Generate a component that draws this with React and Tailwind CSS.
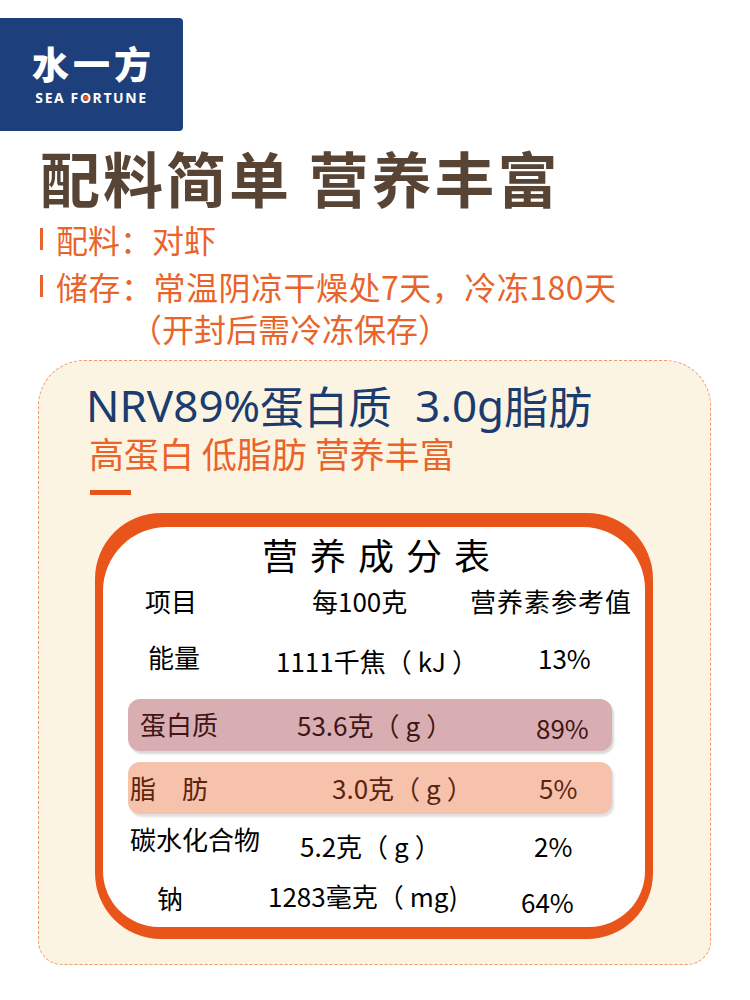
import React from "react";

const CJK = { fontFamily: '"Noto Sans CJK SC", "Noto Sans", sans-serif' };
const LAT = { fontFamily: '"Noto Sans", "Noto Sans CJK SC", sans-serif' };

function Logo() {
  return (
    <div className="mt-[18px] w-[183px] h-[113px] bg-[#1d3f7b] rounded-r-[4px] flex flex-col items-center justify-center">
      <div className="text-white text-[37px] font-black leading-none tracking-[4px] ml-[4px]" style={CJK}>水一方</div>
      <div className="mt-[9px] text-white text-[14px] font-bold leading-none tracking-[1.6px]" style={LAT}>
        SEA F
        <span className="relative inline-block">
          O
          <span className="absolute left-1/2 top-1/2 -translate-x-1/2 -translate-y-1/2 w-[5px] h-[5px] rounded-full bg-[#e8541a]" />
        </span>
        RTUNE
      </div>
    </div>
  );
}

function Row({ h, className = "", children }) {
  return <div className={`flex items-center shrink-0 ${className}`} style={{ height: h }}>{children}</div>;
}

function Paren({ children, close = "）" }) {
  return (
    <>
      （<span className="mx-[6px]">{children}</span>{close}
    </>
  );
}

export default function App() {
  return (
    <div className="w-[750px] h-[1000px] bg-white overflow-hidden flex flex-col" style={CJK}>
      <Logo />

      <div className="mt-[16px] h-[60px] flex items-center ml-[40px] text-[60px] font-bold leading-none tracking-[3px] text-[#574434]">
        配料简单 营养丰富
      </div>

      <div className="mt-[15px] h-[34px] flex items-center text-[32px] leading-none text-[#e9642a]">
        <div className="ml-[40px] w-[3px] h-[22px] bg-[#e9642a]" />
        <div className="ml-[13px]">配料：对虾</div>
      </div>
      <div className="mt-[13px] h-[34px] flex items-center text-[32px] leading-none text-[#e9642a]">
        <div className="ml-[40px] w-[3px] h-[22px] bg-[#e9642a]" />
        <div className="ml-[13px] tracking-[0.5px]">储存：常温阴凉干燥处7天，冷冻180天</div>
      </div>
      <div className="mt-[8px] h-[34px] flex items-center text-[32px] leading-none text-[#e9642a]">
        <div className="ml-[130px]">（开封后需冷冻保存）</div>
      </div>

      <div className="mt-[15px] ml-[38px] w-[673px] h-[605px] bg-[#fcf4e3] border border-dashed border-[#f2996c] rounded-tl-[46px] rounded-tr-[46px] rounded-bl-[24px] rounded-br-[24px] flex flex-col">
        <div className="mt-[20px] ml-[47px] h-[48px] flex items-center text-[44px] leading-[44px] text-[#1b3c6e] whitespace-pre" style={LAT}>
          <span className="inline-block leading-[44px]">NRV89%</span>
          <span className="inline-block leading-[44px]" style={CJK}>蛋白质</span>
          <span className="inline-block leading-[44px]">  3.0g</span>
          <span className="inline-block leading-[44px]" style={CJK}>脂肪</span>
        </div>
        <div className="mt-[6px] ml-[50px] h-[36px] flex items-center text-[35px] leading-[36px] text-[#e9642a]">
          高蛋白 低脂肪 营养丰富
        </div>
        <div className="mt-[19px] ml-[51px] w-[41px] h-[5px] bg-[#e8541a]" />

        <div className="mt-[18px] ml-[56px] w-[558px] h-[426px] bg-[#e8541a] rounded-[66px] pt-[14px] pl-[8px] pr-[8px] pb-[12px] flex">
          <div className="flex-1 bg-white rounded-tl-[64px] rounded-tr-[62px] rounded-bl-[56px] rounded-br-[56px] flex flex-col text-black">
            <Row h={54} className="justify-center">
              <div className="text-[36px] leading-none tracking-[12px] ml-[16px]">营养成分表</div>
            </Row>
            <Row h={40} className="text-[26px] leading-none">
              <div className="ml-[42px] w-[167px]">项目</div>
              <div className="w-[158px]">每100克</div>
              <div className="tracking-[1px]">营养素参考值</div>
            </Row>
            <Row h={72} className="text-[26px] leading-none">
              <div className="ml-[45px] w-[128px]">能量</div>
              <div className="w-[262px] mt-[8px]">1111千焦<Paren>kJ</Paren></div>
              <div className="mt-[1px]">13%</div>
            </Row>
            <div className="mt-[6px] ml-[25px] w-[484px] h-[52px] rounded-[12px] bg-[#d9aeb2] shadow-[2px_3px_2px_rgba(0,0,0,0.15)] flex items-center text-[26px] leading-none text-[#3f1515]">
              <div className="ml-[12px] w-[157px] -mt-[3px]">蛋白质</div>
              <div className="w-[239px]">53.6克<Paren>g</Paren></div>
              <div className="mt-[6px]">89%</div>
            </div>
            <div className="mt-[11px] ml-[25px] w-[484px] h-[52px] rounded-[12px] bg-[#f6c2ac] shadow-[2px_3px_2px_rgba(0,0,0,0.12)] flex items-center text-[26px] leading-none text-[#5a240f]">
              <div className="ml-[2px] w-[202px]">脂　肪</div>
              <div className="w-[207px]">3.0克<Paren>g</Paren></div>
              <div>5%</div>
            </div>
            <Row h={56} className="text-[26px] leading-none">
              <div className="ml-[27px] w-[170px] -mt-[6px]">碳水化合物</div>
              <div className="w-[234px] mt-[8px]">5.2克<Paren>g</Paren></div>
              <div className="mt-[8px]">2%</div>
            </Row>
            <Row h={56} className="text-[26px] leading-none">
              <div className="ml-[54px] w-[111px]">钠</div>
              <div className="w-[253px] -mt-[4px]">1283毫克（<span className="ml-[6px]">mg</span>)</div>
              <div className="mt-[8px]">64%</div>
            </Row>
          </div>
        </div>
      </div>
    </div>
  );
}
